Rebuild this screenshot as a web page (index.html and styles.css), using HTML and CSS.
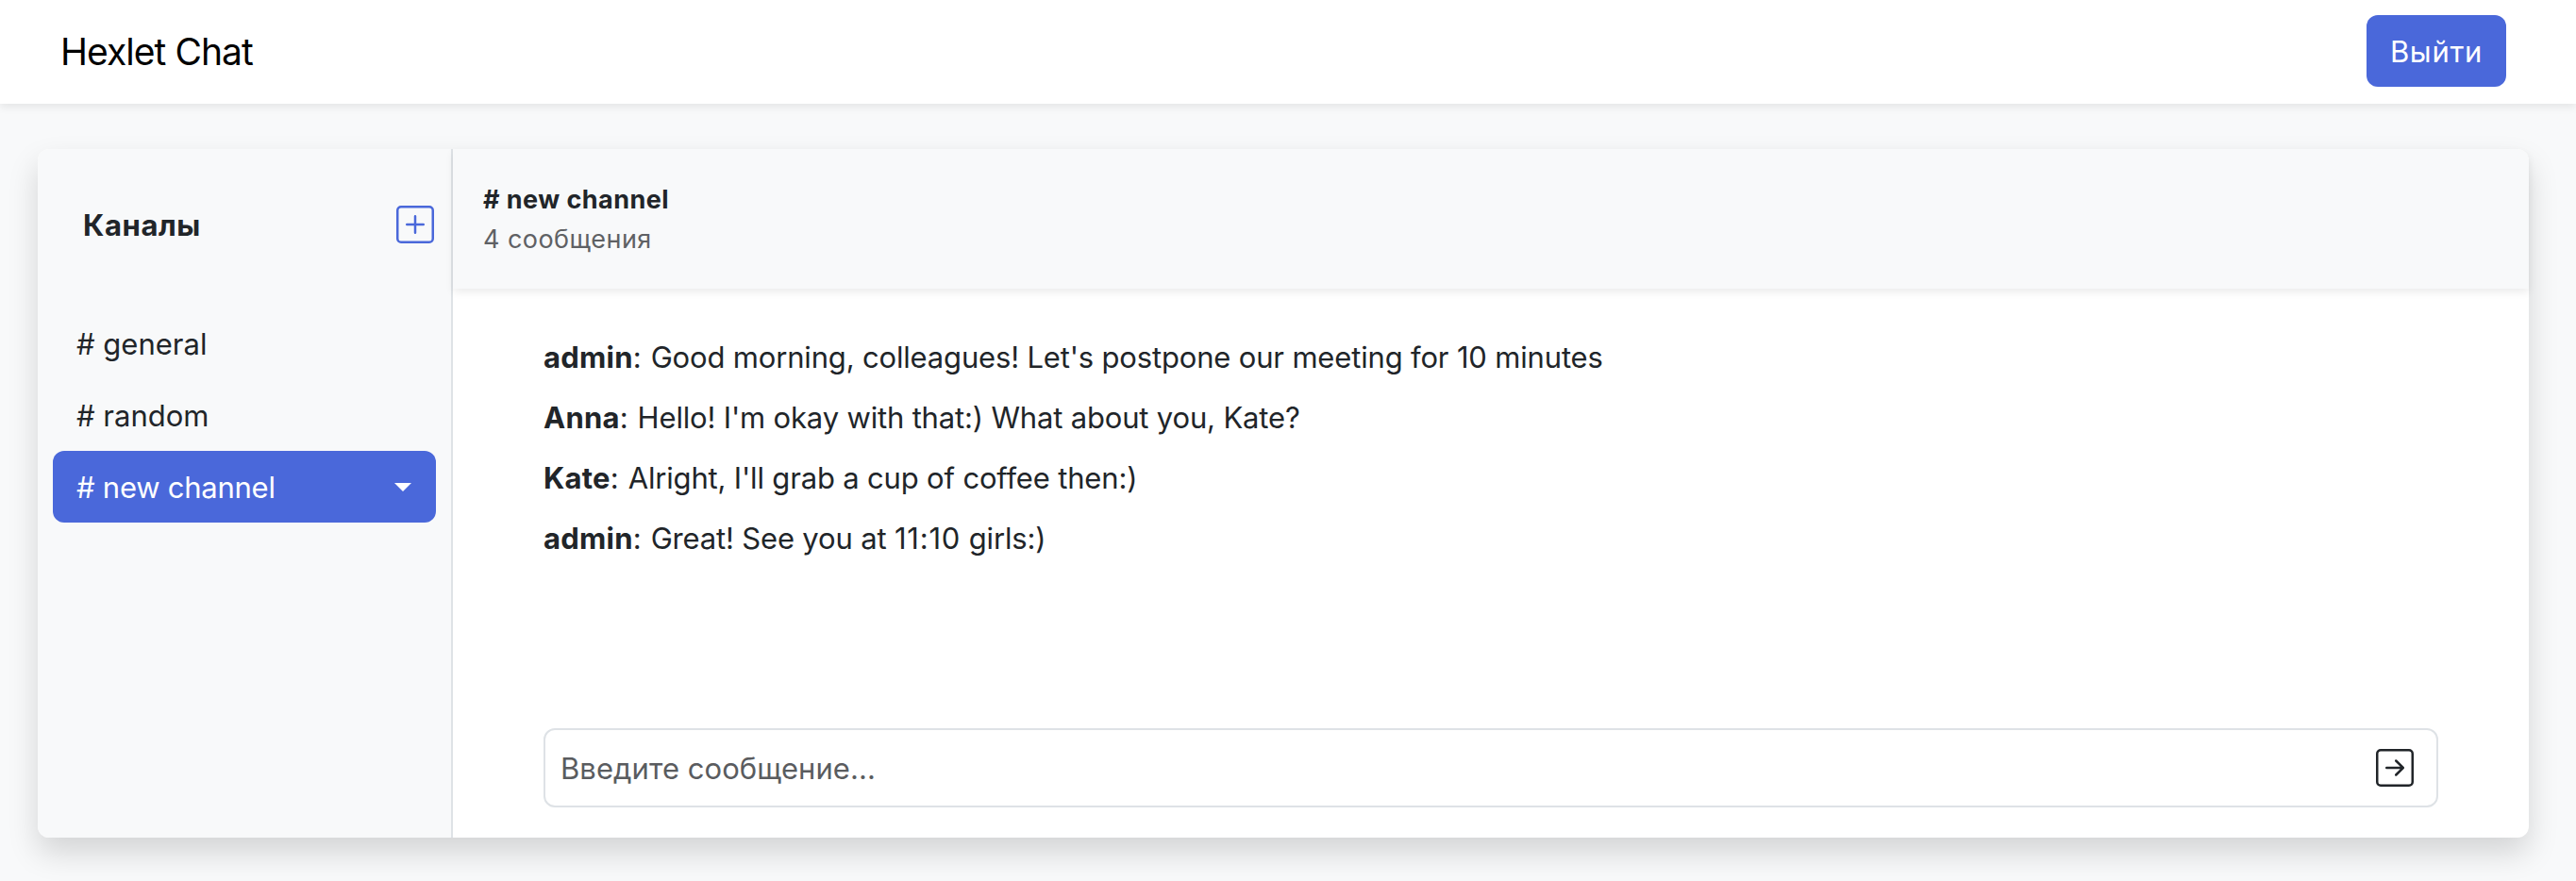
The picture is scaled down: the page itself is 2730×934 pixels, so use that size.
FILE: index.html
```html
<!DOCTYPE html>
<html lang="ru">
<head>
<meta charset="utf-8">
<title>Hexlet Chat</title>
<link rel="stylesheet" href="styles.css">
</head>
<body>
<div class="app">
  <nav class="navbar">
    <a class="brand">Hexlet Chat</a>
    <button class="btn" type="button">Выйти</button>
  </nav>
  <main class="chat">
    <aside class="sidebar">
      <div class="sidebar-head">
        <b class="sidebar-title">Каналы</b>
        <button class="icon-btn" type="button" aria-label="+">
          <svg class="icon" viewBox="0 0 16 16" fill="currentColor"><path d="M14 1a1 1 0 0 1 1 1v12a1 1 0 0 1-1 1H2a1 1 0 0 1-1-1V2a1 1 0 0 1 1-1zM2 0a2 2 0 0 0-2 2v12a2 2 0 0 0 2 2h12a2 2 0 0 0 2-2V2a2 2 0 0 0-2-2z"/><path d="M8 4a.5.5 0 0 1 .5.5v3h3a.5.5 0 0 1 0 1h-3v3a.5.5 0 0 1-1 0v-3h-3a.5.5 0 0 1 0-1h3v-3A.5.5 0 0 1 8 4"/></svg>
        </button>
      </div>
      <ul class="channels">
        <li class="channel"># general</li>
        <li class="channel"># random</li>
        <li class="channel channel-active"># new channel<i class="caret"></i></li>
      </ul>
    </aside>
    <section class="room">
      <header class="room-head">
        <b class="room-name"># new channel</b>
        <span class="room-count">4 сообщения</span>
      </header>
      <div class="messages">
        <p class="message"><b class="author">admin</b><span class="colon">: </span>Good morning, colleagues! Let's postpone our meeting for 10 minutes</p>
        <p class="message"><b class="author">Anna</b><span class="colon">: </span>Hello! I'm okay with that:) What about you, Kate?</p>
        <p class="message"><b class="author">Kate</b><span class="colon">: </span>Alright, I'll grab a cup of coffee then:)</p>
        <p class="message"><b class="author">admin</b><span class="colon">: </span>Great! See you at <span class="time">11:10</span> girls:)</p>
      </div>
      <form class="composer">
        <span class="placeholder">Введите сообщение...</span>
        <svg class="icon" viewBox="0 0 16 16" fill="currentColor"><path d="M15 2a1 1 0 0 0-1-1H2a1 1 0 0 0-1 1v12a1 1 0 0 0 1 1h12a1 1 0 0 0 1-1zM0 2a2 2 0 0 1 2-2h12a2 2 0 0 1 2 2v12a2 2 0 0 1-2 2H2a2 2 0 0 1-2-2zm4.500 5.500a.5.5 0 0 0 0 1h5.793l-2.147 2.146a.5.5 0 0 0 .708.708l3-3a.5.5 0 0 0 0-.708l-3-3a.5.5 0 1 0-.708.708L10.293 7.500z"/></svg>
      </form>
    </section>
  </main>
</div>
</body>
</html>
```
FILE: styles.css
```css
* { box-sizing: border-box; }
body {
  margin: 0;
  font-family: Inter, "Noto Sans", sans-serif;
  font-size: 31px;
  line-height: 48px;
  color: #212529;
}
b { font-weight: 700; }
.app {
  display: flex;
  flex-direction: column;
  height: 934px;
  overflow: hidden;
  background: #f8f9fa;
}
.navbar {
  display: flex;
  align-items: flex-start;
  justify-content: space-between;
  height: 110px;
  padding: 16px 74px 0 64px;
  background: #fff;
  box-shadow: 0 4px 8px rgba(0, 0, 0, .075);
}
.brand {
  padding-top: 9px;
  font-size: 39px;
  line-height: 60px;
  letter-spacing: -.95px;
  color: #000;
}
.btn {
  width: 148px;
  height: 76px;
  padding: 1px 0 0;
  border: 0;
  border-radius: 12px;
  background: #4a68da;
  color: #fff;
  font: inherit;
  letter-spacing: .7px;
}
.chat {
  display: flex;
  height: 730px;
  margin: 48px 50px 0 40px;
  border-radius: 12px;
  background: #fff;
  box-shadow: 0 16px 32px rgba(0, 0, 0, .15);
}
.sidebar {
  width: 440px;
  padding: 0 16px;
  border-right: 2px solid #dee2e6;
  border-radius: 12px 0 0 12px;
  background: #f8f9fa;
}
.sidebar-head {
  display: flex;
  align-items: center;
  justify-content: space-between;
  height: 168px;
  padding: 0 2px 8px 32px;
}
.sidebar-title {
  padding-top: 2px;
  letter-spacing: .6px;
}
.icon-btn {
  display: flex;
  padding: 0;
  border: 0;
  background: none;
  color: #4a68da;
}
.icon {
  display: block;
  width: 40px;
  height: 40px;
}
.channels {
  margin: 0;
  padding: 0;
  list-style: none;
}
.channel {
  display: flex;
  align-items: center;
  justify-content: space-between;
  height: 76px;
  padding: 1px 26px 0 25px;
  border-radius: 12px;
}
.channel-active {
  background: #4a68da;
  color: #fff;
  letter-spacing: -.25px;
}
.caret {
  border-top: 9px solid;
  border-left: 9px solid transparent;
  border-right: 9px solid transparent;
}
.room {
  display: flex;
  flex: 1;
  flex-direction: column;
}
.room-head {
  display: flex;
  flex-direction: column;
  height: 148px;
  padding: 33px 32px 0;
  border-radius: 0 12px 0 0;
  background: #f8f9fa;
  box-shadow: 0 4px 8px rgba(0, 0, 0, .075);
  font-size: 27px;
  line-height: 42px;
  letter-spacing: .45px;
}
.room-count { color: #5f6164; }
.messages {
  flex: 1;
  padding: 49px 96px 0;
}
.message {
  margin: 0 0 16px;
  letter-spacing: -.17px;
}
.author { letter-spacing: .25px; }
.colon { letter-spacing: .6px; }
.time { letter-spacing: .8px; }
.composer {
  display: flex;
  align-items: center;
  justify-content: space-between;
  height: 84px;
  margin: 0 96px 32px;
  padding: 0 24px 0 16px;
  border: 2px solid #dee2e6;
  border-radius: 12px;
}
.placeholder {
  padding-top: 2px;
  letter-spacing: .05px;
  color: #5a5c5f;
}
```
